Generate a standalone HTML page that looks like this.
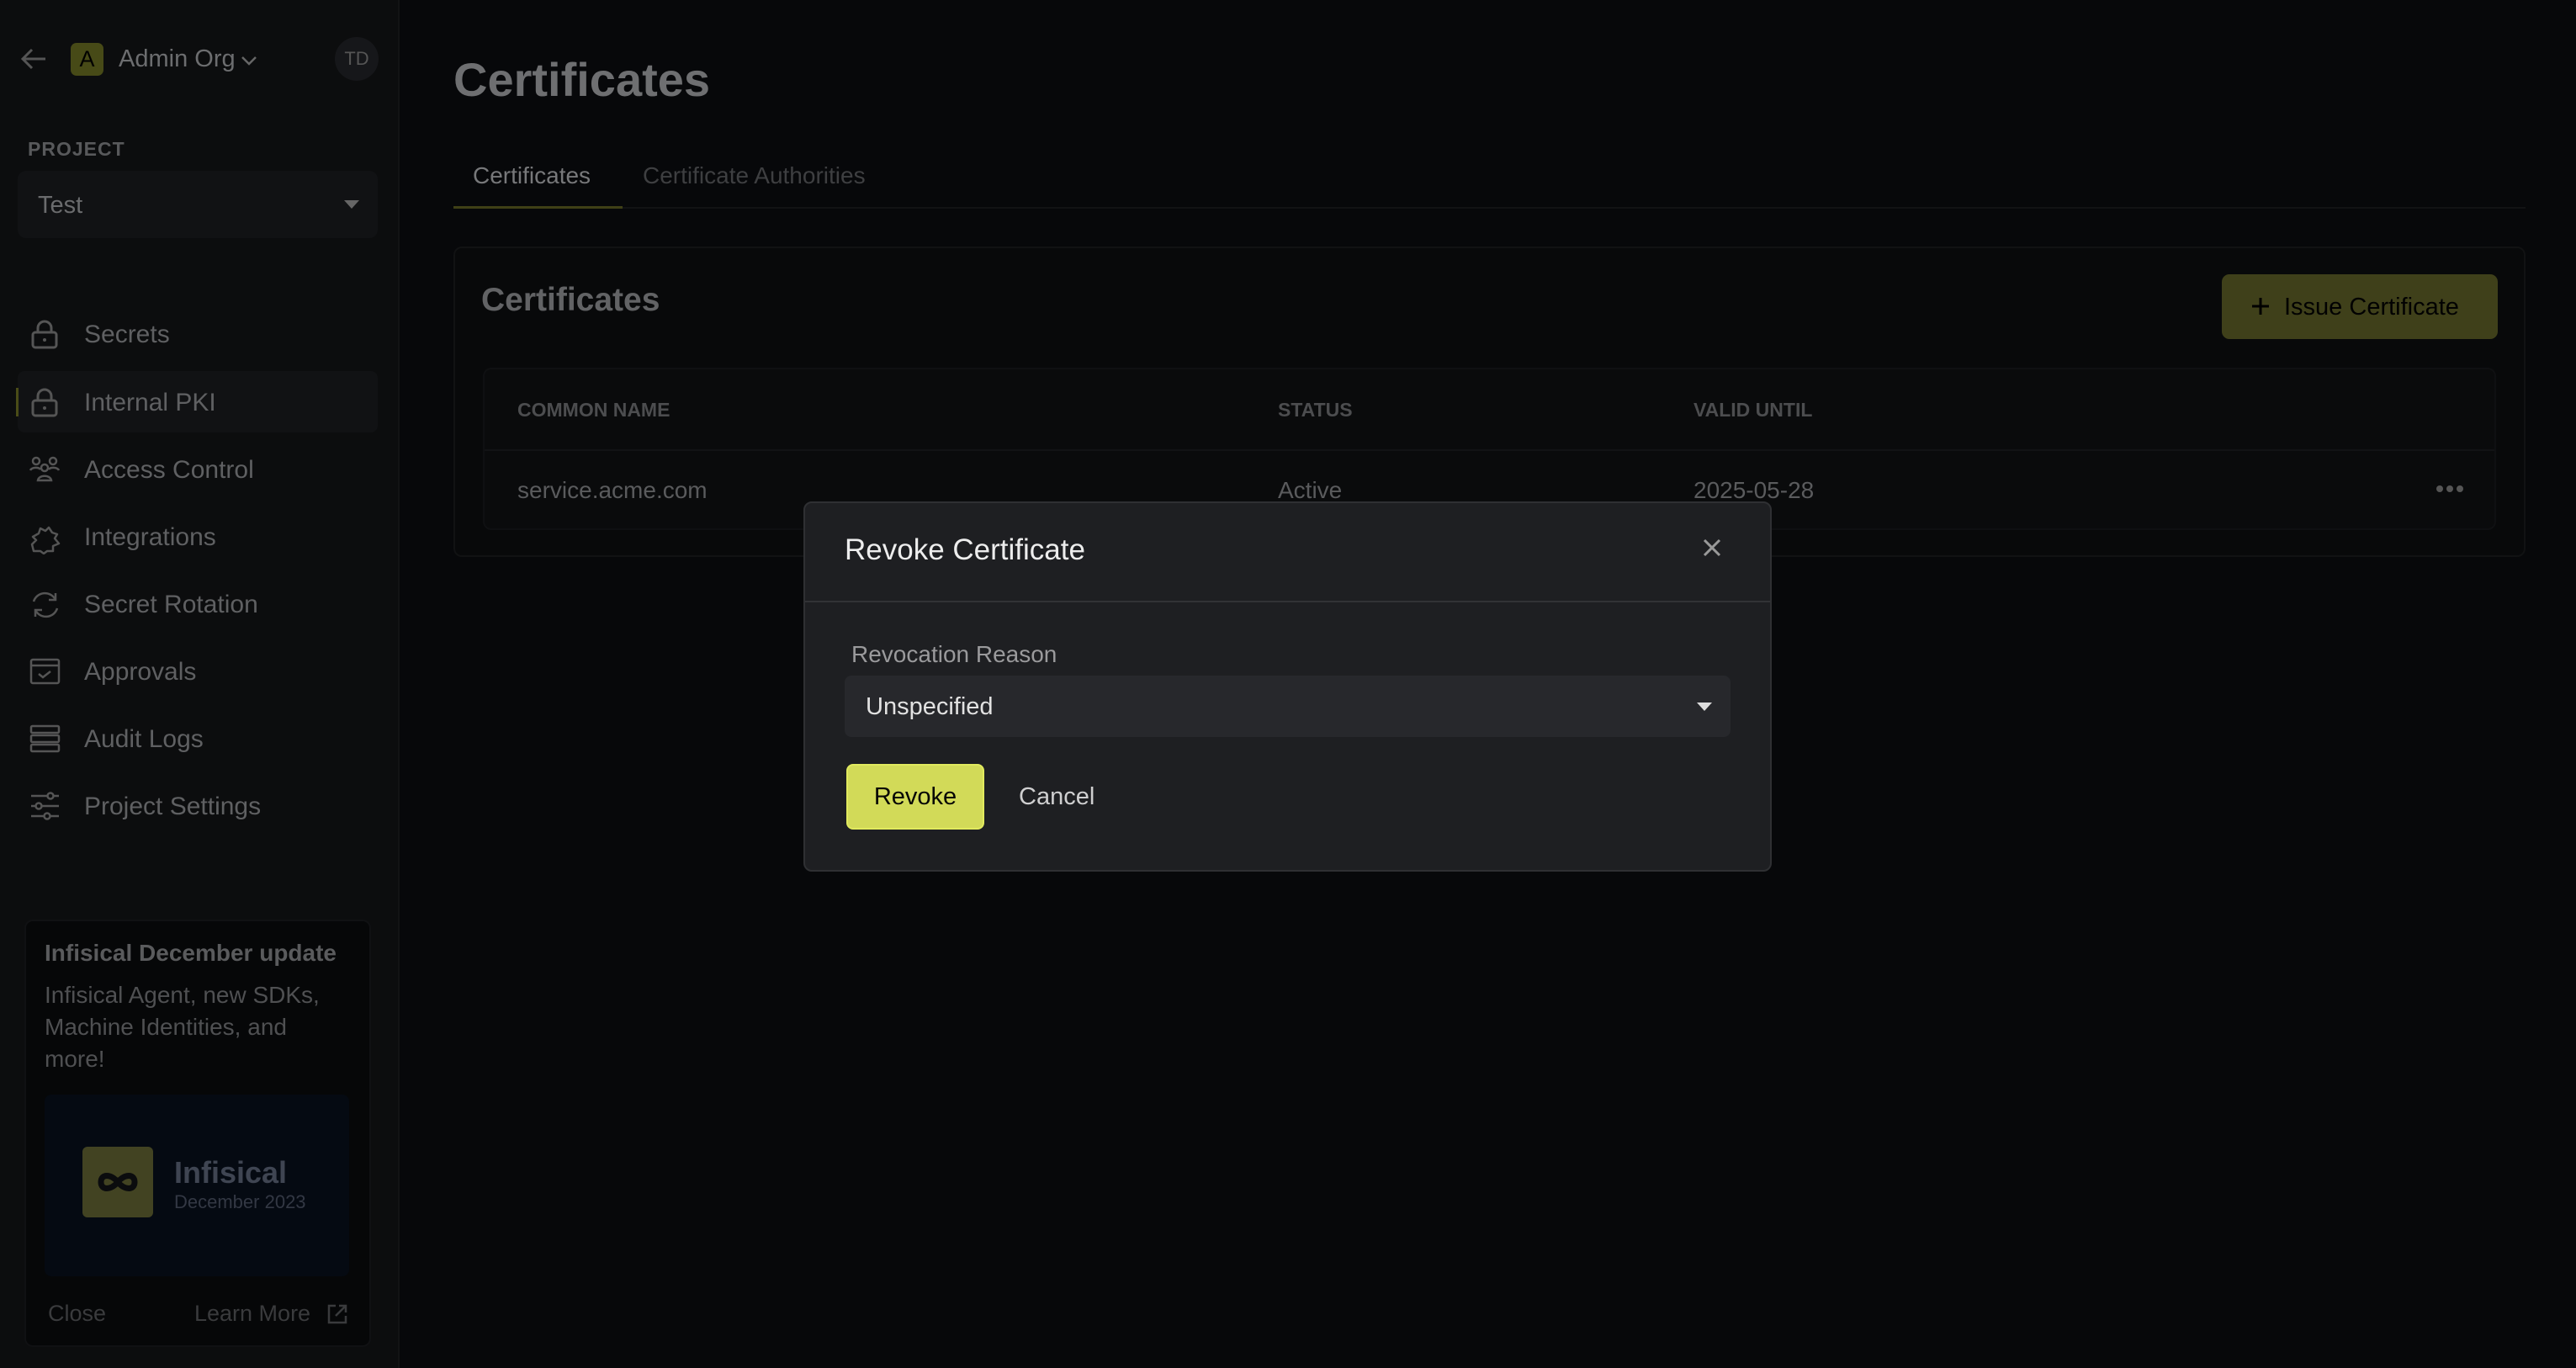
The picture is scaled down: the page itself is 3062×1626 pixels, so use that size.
<!DOCTYPE html>
<html><head><meta charset="utf-8"><style>
*{box-sizing:border-box;margin:0;padding:0}
body{width:3062px;height:1626px;background:#07080a;font-family:"Liberation Sans",sans-serif;position:relative;overflow:hidden;color:#666}
.abs{position:absolute;white-space:nowrap}
.side{position:absolute;left:0;top:0;width:475px;height:1626px;background:#0c0d0e;border-right:2px solid #121314}
.nav{position:absolute;left:100px;font-size:30px;color:#5f6062;line-height:1}
.ic{position:absolute;left:34px;width:40px;height:40px}
</style></head><body>
<div class="side">
  <svg class="abs" style="left:24px;top:56px" width="32" height="28" viewBox="0 0 32 28"><path d="M30 14H4M14 3L3 14l11 11" stroke="#555" stroke-width="3" fill="none"/></svg>
  <div class="abs" style="left:84px;top:51px;width:39px;height:39px;background:#474a17;border-radius:7px;color:#000;font-size:27px;text-align:center;line-height:39px">A</div>
  <div class="abs" style="left:141px;top:54px;font-size:29px;color:#6c6d6f">Admin Org</div>
  <svg class="abs" style="left:286px;top:66px" width="20" height="12"><path d="M2 2l8 8 8-8" stroke="#666" stroke-width="2.5" fill="none"/></svg>
  <div class="abs" style="left:398px;top:44px;width:52px;height:52px;border-radius:50%;background:#16171a;color:#555;font-size:22px;text-align:center;line-height:52px">TD</div>
  <div class="abs" style="left:33px;top:164px;font-size:23px;font-weight:bold;color:#58595b;letter-spacing:1px">PROJECT</div>
  <div class="abs" style="left:21px;top:203px;width:428px;height:80px;background:#111214;border-radius:10px"></div>
  <div class="abs" style="left:45px;top:228px;font-size:29px;color:#6a6b6d">Test</div>
  <svg class="abs" style="left:409px;top:238px" width="18" height="10"><path d="M0 0h18L9 10z" fill="#666"/></svg>
  <div class="abs" style="left:21px;top:441px;width:428px;height:73px;background:#111214;border-radius:8px"></div>
  <div class="abs" style="left:19px;top:461px;width:3px;height:34px;background:#4a4c17"></div>
  <svg class="ic" style="top:378px" viewBox="0 0 40 40"><rect x="5" y="17" width="28" height="18" rx="3" fill="none" stroke="#555" stroke-width="3"/><path d="M11 17v-5a8 8 0 0116 0v5" fill="none" stroke="#555" stroke-width="3"/><circle cx="19" cy="26" r="2" fill="#555"/></svg>
  <div class="nav" style="top:383px">Secrets</div>
  <svg class="ic" style="top:459px" viewBox="0 0 40 40"><rect x="5" y="17" width="28" height="18" rx="3" fill="none" stroke="#555" stroke-width="3"/><path d="M11 17v-5a8 8 0 0116 0v5" fill="none" stroke="#555" stroke-width="3"/><circle cx="19" cy="26" r="2" fill="#555"/></svg>
  <div class="nav" style="top:464px">Internal PKI</div>
  <svg class="ic" style="top:539px" viewBox="0 0 40 40"><g fill="none" stroke="#555" stroke-width="2.5"><circle cx="9" cy="9" r="4"/><circle cx="29" cy="9" r="4"/><circle cx="19" cy="17" r="4"/><path d="M2 20c2-4 10-4 12-1M36 20c-2-4-10-4-12-1M11 32c1-7 15-7 16 0z"/></g></svg>
  <div class="nav" style="top:544px">Access Control</div>
  <svg class="ic" style="top:619px" viewBox="0 0 40 40"><path d="M4 28l5-5-4-4 7-4 2-6 6 3 4-4 4 6 6 2-3 5 5 6-7 3v6H22l-4 3-4-3H6z" fill="none" stroke="#555" stroke-width="2.5" stroke-linejoin="round"/></svg>
  <div class="nav" style="top:624px">Integrations</div>
  <svg class="ic" style="top:699px" viewBox="0 0 40 40"><g fill="none" stroke="#555" stroke-width="2.5"><path d="M6 16a14 14 0 0126-2M34 24a14 14 0 01-26 2"/><path d="M32 6v8h-8M8 34v-8h8"/></g></svg>
  <div class="nav" style="top:704px">Secret Rotation</div>
  <svg class="ic" style="top:779px" viewBox="0 0 40 40"><g fill="none" stroke="#555" stroke-width="2.5"><rect x="3" y="5" width="33" height="28" rx="2"/><path d="M3 12h33M12 22l5 4 9-7"/></g></svg>
  <div class="nav" style="top:784px">Approvals</div>
  <svg class="ic" style="top:859px" viewBox="0 0 40 40"><g fill="none" stroke="#555" stroke-width="2.5"><rect x="3" y="4" width="33" height="8" rx="1.5"/><rect x="3" y="15" width="33" height="8" rx="1.5"/><rect x="3" y="26" width="33" height="8" rx="1.5"/></g></svg>
  <div class="nav" style="top:864px">Audit Logs</div>
  <svg class="ic" style="top:939px" viewBox="0 0 40 40"><g fill="none" stroke="#555" stroke-width="2.5"><path d="M3 7h33M3 19h33M3 31h33"/><circle cx="26" cy="7" r="3.5" fill="#0c0d0e"/><circle cx="12" cy="19" r="3.5" fill="#0c0d0e"/><circle cx="22" cy="31" r="3.5" fill="#0c0d0e"/></g></svg>
  <div class="nav" style="top:944px">Project Settings</div>

  <div class="abs" style="left:29px;top:1093px;width:412px;height:508px;background:#060708;border:2px solid #101113;border-radius:10px"></div>
  <div class="abs" style="left:53px;top:1117px;font-size:28px;font-weight:bold;color:#5a5b5d">Infisical December update</div>
  <div class="abs" style="left:53px;top:1164px;font-size:28px;color:#4f5052;line-height:38px;white-space:normal;width:345px">Infisical Agent, new SDKs, Machine Identities, and more!</div>
  <div class="abs" style="left:53px;top:1301px;width:362px;height:216px;background:#050a12;border-radius:8px"></div>
  <div class="abs" style="left:98px;top:1363px;width:84px;height:84px;background:#424322;border-radius:6px"></div>
  <svg class="abs" style="left:109px;top:1376px" width="62" height="58" viewBox="0 0 62 58"><path d="M31 29c-8-10-20-10-20 0s12 10 20 0 20-10 20 0-12 10-20 0z" fill="none" stroke="#0b0c0e" stroke-width="7"/></svg>
  <div class="abs" style="left:207px;top:1373px;font-size:36px;font-weight:bold;color:#3f4552">Infisical</div>
  <div class="abs" style="left:207px;top:1416px;font-size:22px;color:#333844">December 2023</div>
  <div class="abs" style="left:57px;top:1546px;font-size:27px;color:#3a3b3d">Close</div>
  <div class="abs" style="left:231px;top:1546px;font-size:27px;color:#3a3b3d">Learn More</div>
  <svg class="abs" style="left:388px;top:1549px" width="26" height="26" viewBox="0 0 26 26"><g fill="none" stroke="#3a3b3d" stroke-width="2.5"><path d="M11 3H3v20h20v-8M15 3h8v8M23 3L11 15"/></g></svg>
</div>

<div class="abs" style="left:539px;top:62px;font-size:56px;font-weight:bold;color:#6e6f71">Certificates</div>
<div class="abs" style="left:539px;top:246px;width:2463px;height:2px;background:#121314"></div>
<div class="abs" style="left:562px;top:193px;font-size:28px;color:#77787a">Certificates</div>
<div class="abs" style="left:764px;top:193px;font-size:28px;color:#3e3f41">Certificate Authorities</div>
<div class="abs" style="left:539px;top:245px;width:201px;height:3px;background:#3f4016"></div>

<div class="abs" style="left:539px;top:293px;width:2463px;height:369px;background:#08090a;border:2px solid #111213;border-radius:10px"></div>
<div class="abs" style="left:572px;top:335px;font-size:39px;font-weight:bold;color:#626365">Certificates</div>
<div class="abs" style="left:2641px;top:326px;width:328px;height:77px;background:#3f401a;border-radius:9px"></div>
<svg class="abs" style="left:2675px;top:352px" width="24" height="24"><path d="M12 2v20M2 12h20" stroke="#000" stroke-width="3"/></svg>
<div class="abs" style="left:2715px;top:349px;font-size:29px;color:#020202">Issue Certificate</div>
<div class="abs" style="left:574px;top:437px;width:2393px;height:193px;background:#0a0b0c;border:2px solid #0f1012;border-radius:10px"></div>
<div class="abs" style="left:576px;top:534px;width:2389px;height:2px;background:#121315"></div>
<div class="abs" style="left:615px;top:474px;font-size:23px;font-weight:bold;color:#4c4d4f">COMMON NAME</div>
<div class="abs" style="left:1519px;top:474px;font-size:23px;font-weight:bold;color:#4c4d4f">STATUS</div>
<div class="abs" style="left:2013px;top:474px;font-size:23px;font-weight:bold;color:#4c4d4f">VALID UNTIL</div>
<div class="abs" style="left:615px;top:567px;font-size:28px;color:#5a5b5d">service.acme.com</div>
<div class="abs" style="left:1519px;top:567px;font-size:28px;color:#5a5b5d">Active</div>
<div class="abs" style="left:2013px;top:567px;font-size:28px;color:#5a5b5d">2025-05-28</div>
<svg class="abs" style="left:2895px;top:574px" width="34" height="14"><circle cx="5" cy="7" r="4" fill="#555"/><circle cx="17" cy="7" r="4" fill="#555"/><circle cx="29" cy="7" r="4" fill="#555"/></svg>

<div class="abs" style="left:955px;top:596px;width:1151px;height:440px;background:#1e1f22;border:2px solid #2f3033;border-radius:10px"></div>
<div class="abs" style="left:1004px;top:634px;font-size:35px;color:#ededed">Revoke Certificate</div>
<svg class="abs" style="left:2024px;top:640px" width="22" height="22"><path d="M2 2l18 18M20 2L2 20" stroke="#999" stroke-width="3"/></svg>
<div class="abs" style="left:957px;top:714px;width:1147px;height:2px;background:#323336"></div>
<div class="abs" style="left:1012px;top:762px;font-size:28px;color:#9a9a9c">Revocation Reason</div>
<div class="abs" style="left:1004px;top:803px;width:1053px;height:73px;background:#27282c;border-radius:8px"></div>
<div class="abs" style="left:1029px;top:824px;font-size:29px;color:#e2e2e2">Unspecified</div>
<svg class="abs" style="left:2017px;top:835px" width="18" height="10"><path d="M0 0h18L9 10z" fill="#ddd"/></svg>
<div class="abs" style="left:1006px;top:908px;width:164px;height:78px;background:#d2da58;border:2px solid #e1ea5e;border-radius:8px;color:#050505;font-size:29px;text-align:center;line-height:74px">Revoke</div>
<div class="abs" style="left:1211px;top:931px;font-size:29px;color:#cfcfd0">Cancel</div>
</body></html>
